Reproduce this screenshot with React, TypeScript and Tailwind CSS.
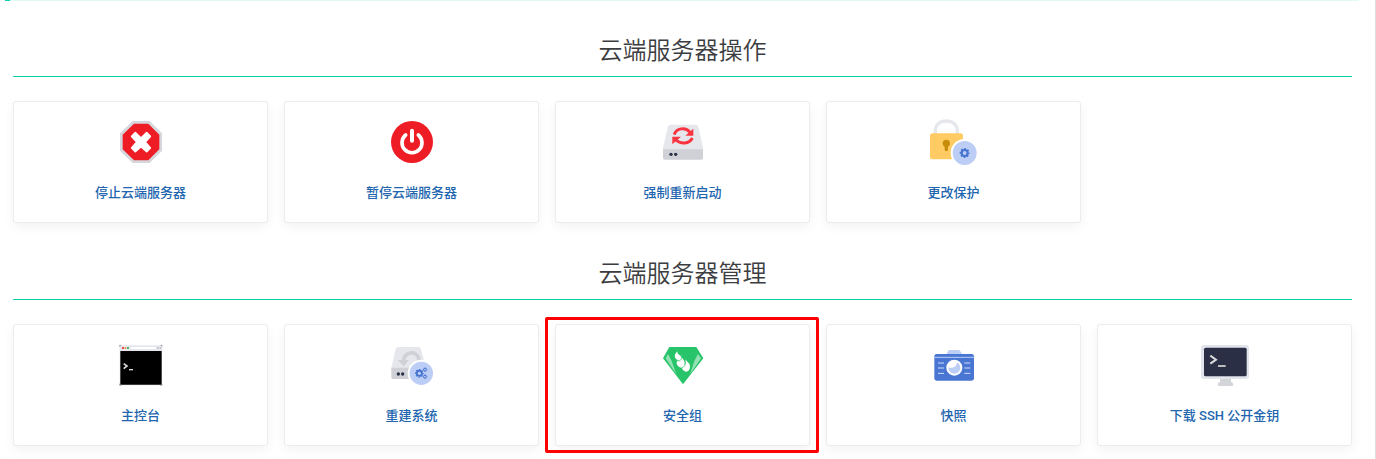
import type { ReactNode } from "react";

function Icon({ viewBox, children }: { viewBox: string; children: ReactNode }) {
  return (
    <svg className="size-12" viewBox={viewBox} fill="none" aria-hidden="true">
      {children}
    </svg>
  );
}

// eight teeth come from a dashed ring around the hub
function Gear({ cx, cy, r }: { cx: number; cy: number; r: number }) {
  return (
    <g stroke="#4673cf">
      <circle cx={cx} cy={cy} r={r * 0.6} strokeWidth={r * 0.42} />
      <circle cx={cx} cy={cy} r={r * 0.86} strokeWidth={r * 0.28} pathLength={16} strokeDasharray="1 1" strokeDashoffset={0.5} />
    </g>
  );
}

function StopIcon() {
  return (
    <Icon viewBox="21 24 144 144">
      <path d="M68 33H119L156 70V122L119 159H68L30 122V70Z" fill="#d5d7dc" />
      <path d="M72 41H115L148 74V118L115 151H72L38 118V74Z" fill="#ee1c25" />
      <path d="M65 79L76 68L93 84L110 68L121 79L106 96L121 114L110 125L93 110L76 125L65 114L80 96Z" fill="#fff" stroke="#fff" strokeWidth="5" strokeLinejoin="round" />
    </Icon>
  );
}

function SuspendIcon() {
  return (
    <Icon viewBox="24 24 144 144">
      <circle cx="96" cy="96" r="63" fill="#ee1c25" />
      <path d="M77 75A30 30 0 1 0 115 75" stroke="#fff" strokeWidth="11" strokeLinecap="round" />
      <path d="M96 62V92" stroke="#fff" strokeWidth="12" strokeLinecap="round" />
    </Icon>
  );
}

function RestartIcon() {
  return (
    <Icon viewBox="21 24 144 144">
      <path d="M56 44H131Q137 44 139 50L153 113V120H33V113L48 50Q50 44 56 44Z" fill="#e5e7ec" />
      <path d="M33 118H153V143Q153 149 147 149H39Q33 149 33 143Z" fill="#cfd1d7" />
      <circle cx="57" cy="133" r="5" fill="#2a3047" />
      <circle cx="71" cy="133" r="5" fill="#2a3047" />
      <path d="M67 74C72 54 101 50 114 67" stroke="#fa3340" strokeWidth="9" />
      <path d="M124 56V77H100Z" fill="#fa3340" />
      <path d="M121 84C112 102 87 104 72 90" stroke="#fa3340" strokeWidth="9" />
      <path d="M61 80H87L61 103Z" fill="#fa3340" />
    </Icon>
  );
}

function ProtectionIcon() {
  return (
    <Icon viewBox="24 24 144 144">
      <path d="M40 75V64C40 45 53 33 73 33S106 45 106 64V75" stroke="#e5e7ec" strokeWidth="10" />
      <rect x="24" y="70" width="99" height="78" rx="8" fill="#ffcb62" />
      <circle cx="73" cy="100" r="11" fill="#c98b0a" />
      <path d="M68 103H78V118Q78 124 73 124T68 118Z" fill="#c98b0a" />
      <circle cx="128" cy="129" r="42" fill="#fff" />
      <circle cx="128" cy="129" r="36" fill="#bccdf6" />
      <Gear cx={128} cy={129} r={15} />
    </Icon>
  );
}

function ConsoleIcon() {
  return (
    <Icon viewBox="21 18 144 144">
      <rect x="29" y="31" width="127" height="120" rx="3" fill="#e6e7ee" />
      <path d="M31 48H155V149H31Z" fill="#000" />
      <rect x="36" y="36" width="6" height="6" fill="#f04a51" />
      <rect x="44" y="36" width="5" height="6" fill="#e9a04a" />
      <rect x="51" y="36" width="6" height="6" fill="#4dbb72" />
      <rect x="62" y="36" width="75" height="6" rx="2" fill="#fff" />
      <path d="M141 36H146V42H141ZM149 36H154V42H149Z" fill="#c3c5cd" />
      <path d="M29 35V31H34M152 31H156V35M29 146V151H34M151 151H156V146" stroke="#777a84" strokeWidth="2" />
      <path d="M41 86L51 93L41 101" stroke="#d9d9d9" strokeWidth="5" />
      <path d="M57 104H69" stroke="#d9d9d9" strokeWidth="4" />
    </Icon>
  );
}

function RebuildIcon() {
  return (
    <Icon viewBox="24 18 144 144">
      <path d="M55 36H115Q121 36 123 42L138 100V106H34V100L47 42Q49 36 55 36Z" fill="#e5e7ec" />
      <path d="M34 98H138V132H39Q34 132 34 127Z" fill="#cfd1d7" />
      <circle cx="55" cy="117" r="5" fill="#2a3047" />
      <circle cx="68" cy="117" r="5" fill="#2a3047" />
      <path d="M71 77C72 50 108 45 116 69L117 82" stroke="#cfd1d7" strokeWidth="11" />
      <path d="M53 75H87L71 94Z" fill="#cfd1d7" />
      <circle cx="124" cy="115" r="41" fill="#fff" />
      <circle cx="124" cy="115" r="35" fill="#bccdf6" />
      <Gear cx={118} cy={115} r={13} />
      <Gear cx={135} cy={104} r={7} />
      <Gear cx={135} cy={125} r={7} />
    </Icon>
  );
}

function SecurityIcon() {
  return (
    <Icon viewBox="21 18 144 144">
      <path d="M52 36H133L154 70L93 148L33 70Z" fill="#27c469" />
      <path d="M48 57L41 70L73 118L58 76Z" fill="#93e1b4" />
      <path d="M138 57L147 70L114 118L128 76Z" fill="#93e1b4" />
      <path d="M77 49C73 59 88 60 88 69C88 76 81 78 75 74C66 69 66 57 77 49Z" fill="#fff" />
      <path d="M87 58C86 70 99 73 98 86C98 96 91 101 82 96C73 91 72 81 77 76C85 78 91 70 87 58Z" fill="#fff" />
      <path d="M99 69C99 79 116 81 114 97C113 106 108 111 101 110C91 107 87 98 93 94C101 90 103 81 99 69Z" fill="#fff" />
      <path d="M75 77C84 80 90 73 89 65M89 99C98 96 101 88 101 81" stroke="#27c469" strokeWidth="2" />
    </Icon>
  );
}

function SnapshotIcon() {
  return (
    <Icon viewBox="24 18 144 144">
      <path d="M72 59L78 49Q80 45 84 45H109Q113 45 115 49L121 59Z" fill="#bccdf6" />
      <rect x="37" y="57" width="119" height="80" rx="7" fill="#4876d2" />
      <path d="M37 67H156" stroke="#bccdf6" strokeWidth="3" />
      <path d="M48 84H66M48 99H66M48 115H66M127 84H145M127 99H145M127 115H145" stroke="#d2ddf8" strokeWidth="3" />
      <circle cx="97" cy="98" r="24" fill="#fff" />
      <circle cx="97" cy="98" r="18" fill="#bccdf6" />
      <path d="M81 89C86 77 99 75 105 80C104 95 96 99 79 98Z" fill="#fff" />
    </Icon>
  );
}

function SshKeyIcon() {
  return (
    <Icon viewBox="18 18 144 144">
      <path d="M75 129H108V141Q115 142 115 149Q115 153 110 153H73Q68 153 68 149Q68 142 75 141Z" fill="#d3d5d9" />
      <rect x="18" y="30" width="144" height="102" rx="9" fill="#e2e4eb" />
      <rect x="27" y="38" width="128" height="86" rx="5" fill="#2a2f45" />
      <path d="M46 62L63 74L46 86" stroke="#d9d9d9" strokeWidth="6" />
      <path d="M69 93H92" stroke="#d9d9d9" strokeWidth="5" />
    </Icon>
  );
}

type Action = { label: string; icon: () => ReactNode; highlighted?: boolean };

const operations: Action[] = [
  { label: "停止云端服务器", icon: StopIcon },
  { label: "暂停云端服务器", icon: SuspendIcon },
  { label: "强制重新启动", icon: RestartIcon },
  { label: "更改保护", icon: ProtectionIcon }
];

const management: Action[] = [
  { label: "主控台", icon: ConsoleIcon },
  { label: "重建系统", icon: RebuildIcon },
  { label: "安全组", icon: SecurityIcon, highlighted: true },
  { label: "快照", icon: SnapshotIcon },
  { label: "下载 SSH 公开金钥", icon: SshKeyIcon }
];

function ActionSection({ title, actions }: { title: string; actions: Action[] }) {
  return (
    <section className="pt-8">
      <h2 className="border-b border-[#09d3ac] pt-px pb-[7px] text-center text-2xl leading-9 font-[350] text-[#3c3d41]">{title}</h2>
      <div className="mt-6 grid grid-cols-5 gap-4">
        {actions.map(({ label, icon: ActionIcon, highlighted }) => (
          <div key={label} className="relative">
            <a
              href="#"
              className="flex flex-col items-center rounded-[3px] border border-[#ececec] bg-white pt-4 pb-[19px] text-[13px] leading-5 font-medium text-[#2165ae] shadow-[0_4px_12px_rgba(0,0,0,0.05)]"
            >
              <ActionIcon />
              <span className="mt-[17px]">{label}</span>
            </a>
            {highlighted && (
              <div className="pointer-events-none absolute -inset-y-[7px] -right-[9px] -left-2.5 rounded-xs border-3 border-[#ff0000]" />
            )}
          </div>
        ))}
      </div>
    </section>
  );
}

export default function App() {
  return (
    <main className="border-r border-[#dedede] bg-white font-[Roboto,'Noto_Sans_CJK_SC',sans-serif]">
      <div className="-mb-px mr-4 ml-[5px] h-px bg-[#e2f9f4]">
        <div className="h-px w-[5px] bg-[#09d3ac]" />
      </div>
      <div className="pr-[23px] pb-[13px] pl-[13px]">
        <ActionSection title="云端服务器操作" actions={operations} />
        <ActionSection title="云端服务器管理" actions={management} />
      </div>
    </main>
  );
}
